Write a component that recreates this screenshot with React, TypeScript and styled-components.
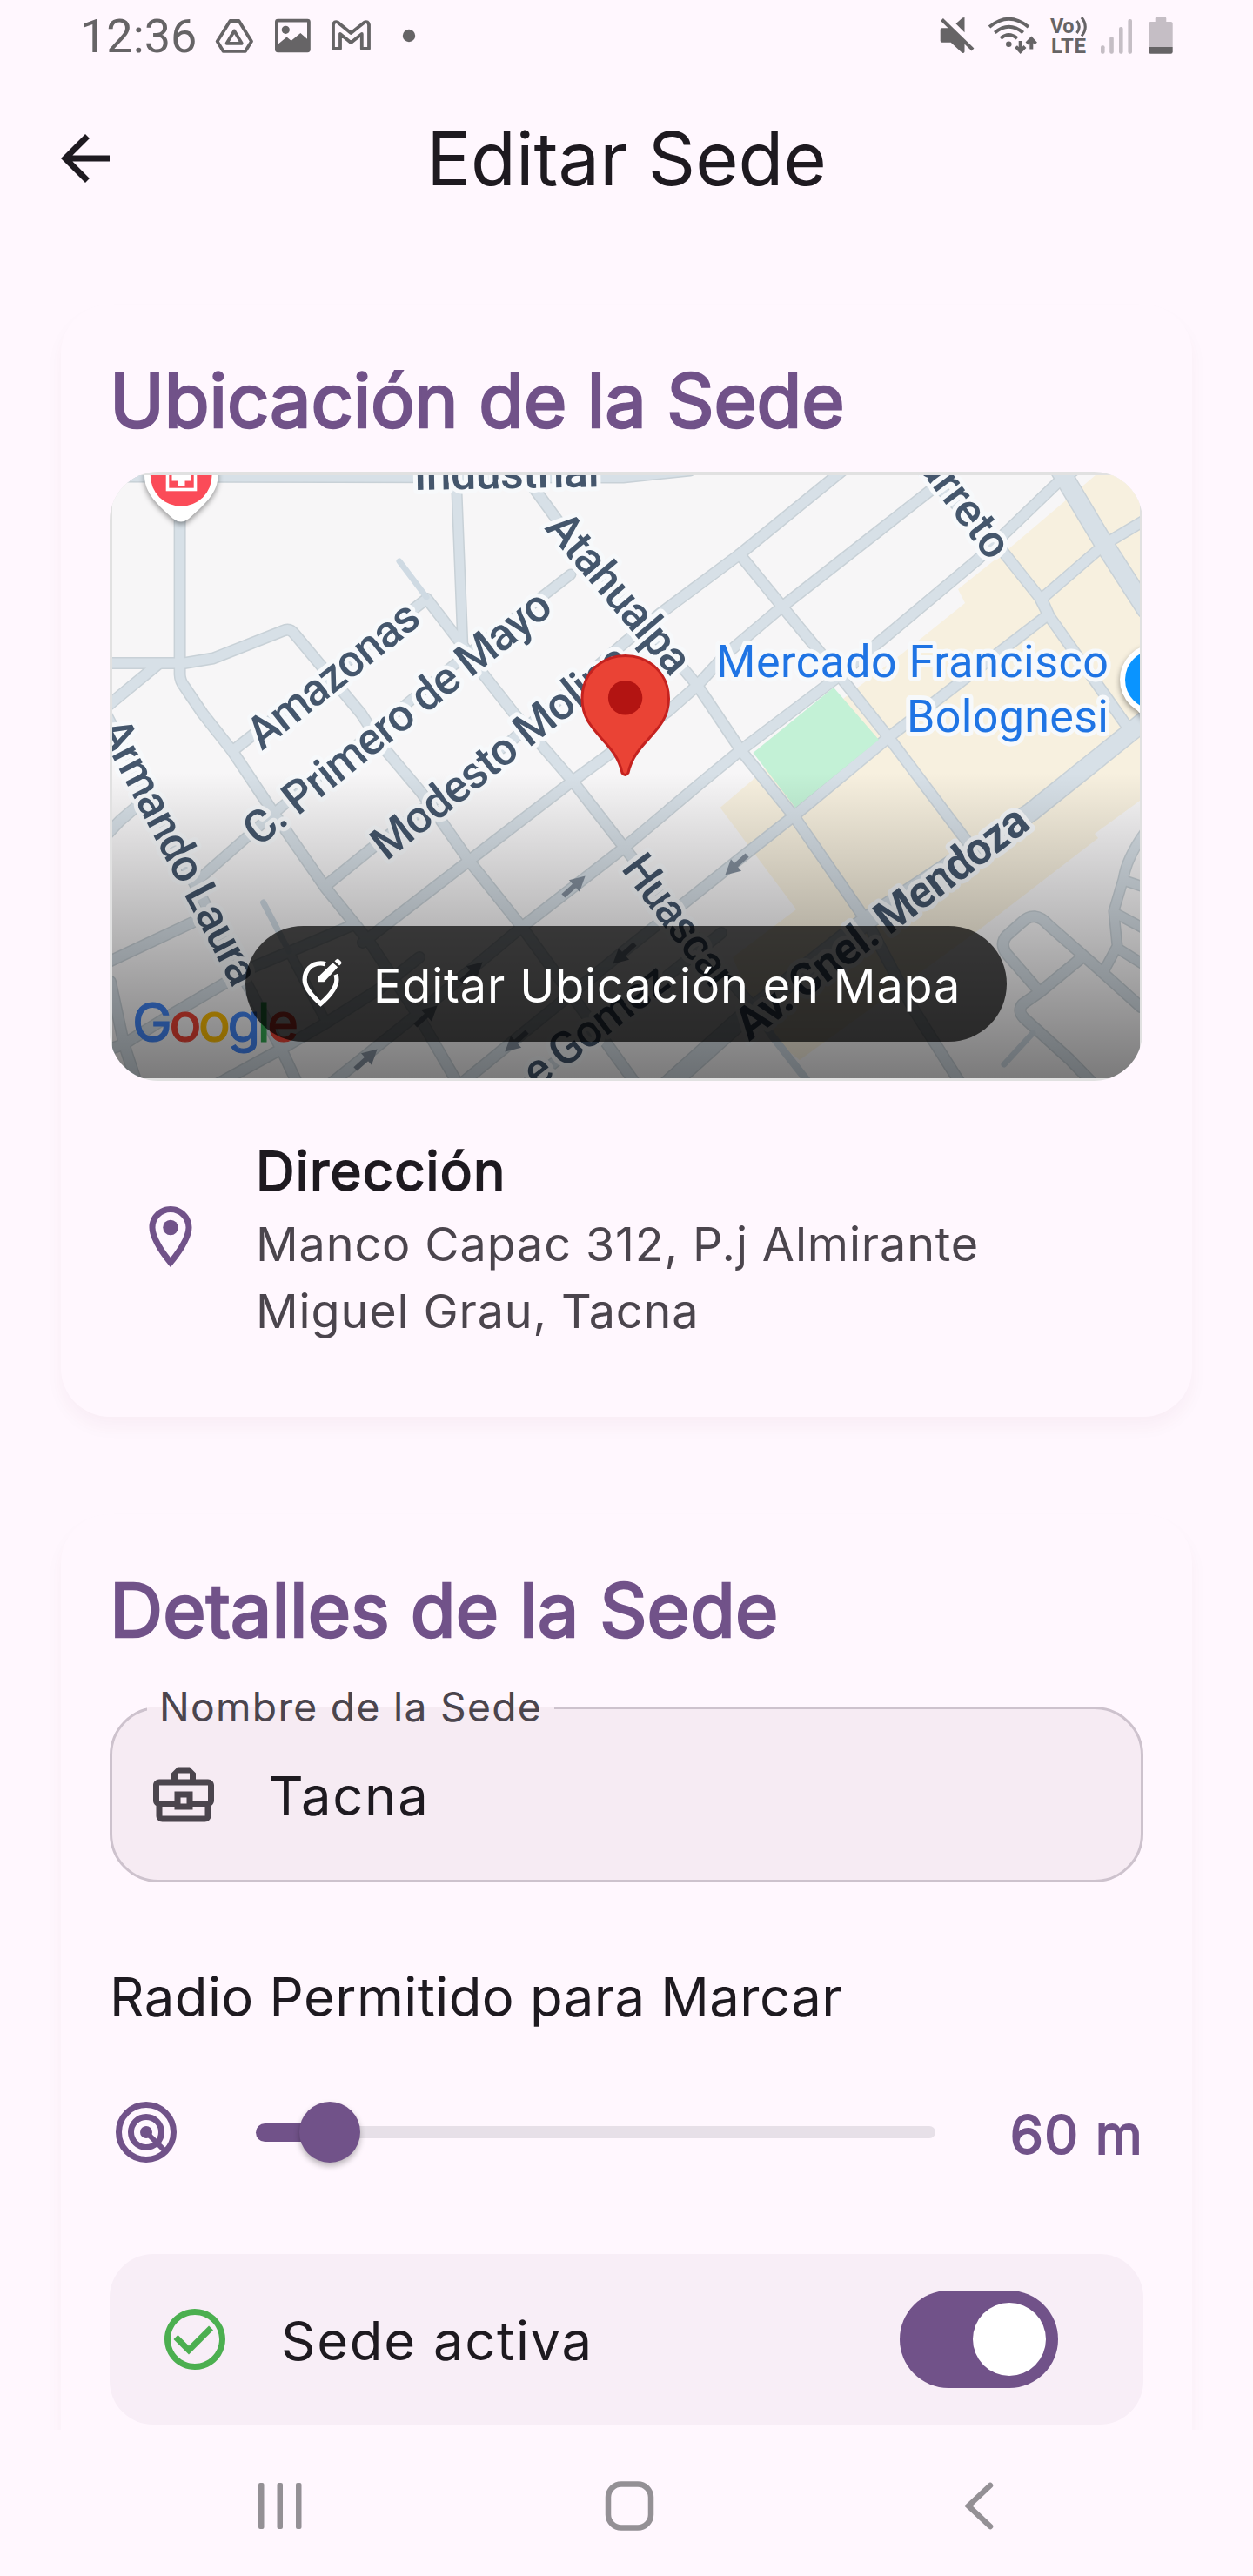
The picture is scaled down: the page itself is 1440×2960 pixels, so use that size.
import React from "react";
import styled, { createGlobalStyle } from "styled-components";

const c = {
  surface: "#fff7fe",
  primary: "#715289",
  ink: "#1e1a20",
  inkSoft: "#4b454d",
  status: "#666466",
  nav: "#949095",
};

const Global = createGlobalStyle`
  * { box-sizing: border-box; }
  body { margin: 0; background: ${c.surface}; }
`;

const Screen = styled.div`
  width: 1440px;
  height: 2960px;
  display: flex;
  flex-direction: column;
  overflow: hidden;
  background: ${c.surface};
  color: ${c.ink};
  font-family: Inter, "Liberation Sans", sans-serif;
  font-optical-sizing: none;
  font-variation-settings: "opsz" 14;
`;

const StatusBar = styled.div`
  height: 84px;
  flex: none;
  display: flex;
  align-items: flex-start;
  padding-left: 92px;
`;

const Clock = styled.span`
  width: 148px;
  font: 400 54px/84px Roboto, "Liberation Sans", sans-serif;
  color: ${c.status};
`;

const StatusRight = styled.div`
  margin-left: auto;
  width: 400px;
  height: 84px;
`;

const AppBar = styled.header`
  height: 196px;
  flex: none;
  display: grid;
  grid-template-columns: 84px 1fr 84px;
  align-items: center;
  padding: 0 56px;
`;

const ScreenTitle = styled.h1`
  margin: 0;
  text-align: center;
  font-size: 84.7px;
  line-height: 108px;
  font-weight: 400;
`;

const Icon = styled.svg<{ $size?: number }>`
  display: block;
  flex: none;
  width: ${(p) => p.$size ?? 84}px;
  height: ${(p) => p.$size ?? 84}px;
`;

const Content = styled.main`
  height: 2512px;
  flex: none;
  overflow: hidden;
  display: flex;
  flex-direction: column;
  gap: 112px;
  padding: 70px 70px 0;
`;

const Card = styled.section<{ $height: number }>`
  height: ${(p) => p.$height}px;
  flex: none;
  padding: 56px;
  border-radius: 56px;
  background: ${c.surface};
  box-shadow: 0 12px 20px rgba(100, 30, 50, 0.04);
`;

const CardTitle = styled.h2<{ $tracking: number }>`
  margin: 0;
  color: ${c.primary};
  font-size: 84.7px;
  line-height: 108px;
  font-weight: 400;
  letter-spacing: ${(p) => p.$tracking}px;
  white-space: nowrap;
  -webkit-text-stroke: 2.65px ${c.primary};
`;

const MapFrame = styled.div`
  position: relative;
  margin-top: 28px;
  height: 700px;
  width: 1187px;
  padding: 4px 3px 3px 3px;
  border-radius: 56px;
  overflow: hidden;
  background: #e1e1e1;
`;

const MapDrawing = styled.svg`
  display: block;
  width: 1181px;
  height: 693px;
`;

const MapShade = styled.div`
  position: absolute;
  inset: 346px 3px 3px 3px;
  background: linear-gradient(rgba(0, 0, 0, 0), rgba(0, 0, 0, 0.5));
`;

const EditPill = styled.button`
  position: absolute;
  left: 156px;
  top: 522px;
  width: 875px;
  height: 133px;
  border: 0;
  border-radius: 67px;
  padding: 0 0 0 55px;
  display: flex;
  align-items: center;
  gap: 29px;
  background: rgba(0, 0, 0, 0.7);
  color: #fff;
  font: inherit;
  font-size: 53.9px;
  letter-spacing: 0.875px;
  white-space: nowrap;
`;

const PillLabel = styled.span`
  padding-top: 3px;
`;

const AddressRow = styled.div`
  margin-top: 58px;
  display: flex;
  align-items: center;
  padding-left: 28px;
  gap: 56px;
`;

const AddressIcon = styled(Icon)`
  margin-bottom: 4px;
`;

const AddressTitle = styled.div`
  font-size: 61.6px;
  line-height: 91px;
  letter-spacing: 1.3px;
  -webkit-text-stroke: 1.9px ${c.ink};
`;

const AddressText = styled.div`
  width: 900px;
  color: ${c.inkSoft};
  font-size: 53.9px;
  line-height: 77px;
  letter-spacing: 0.875px;
`;

const Field = styled.fieldset`
  margin: 36px 0 0;
  padding: 0 0 0 40px;
  min-width: 0;
  width: 1188px;
  height: 223px;
  border: 3.5px solid #cdc2cd;
  border-radius: 56px;
  background: #f6ebf3;
`;

const FieldLabel = styled.legend`
  height: 44px;
  margin: 0;
  padding: 0 14px;
  color: ${c.inkSoft};
  font-size: 46.2px;
  line-height: 42px;
  letter-spacing: 1.3px;
`;

const FieldBody = styled.div`
  height: 156px;
  display: flex;
  align-items: center;
  gap: 56px;
`;

const BodyText = styled.span`
  padding-top: 4px;
  font-size: 61.6px;
  line-height: 92px;
  letter-spacing: 1.7px;
  white-space: nowrap;
`;

const RadiusTitle = styled.div`
  margin-top: 86px;
  font-size: 61.6px;
  line-height: 92px;
  letter-spacing: 0.45px;
`;

const SliderRow = styled.div`
  margin-top: 67px;
  height: 84px;
  display: flex;
  align-items: center;
`;

const Slider = styled.div`
  margin-left: 84px;
  width: 781px;
  display: flex;
  align-items: center;
`;

const SliderDone = styled.div`
  width: 60px;
  height: 21px;
  border-radius: 11px 0 0 11px;
  background: ${c.primary};
`;

const SliderThumb = styled.div`
  width: 70px;
  height: 70px;
  margin: 0 -10px;
  z-index: 1;
  border-radius: 50%;
  background: ${c.primary};
  box-shadow: 0 4px 7px rgba(0, 0, 0, 0.28);
`;

const SliderRest = styled.div`
  flex: 1;
  height: 14px;
  border-radius: 0 7px 7px 0;
  background: #e7e0e8;
`;

const SliderValue = styled.div`
  margin-left: auto;
  color: ${c.primary};
  font-size: 61.6px;
  line-height: 92px;
  padding-top: 5px;
  letter-spacing: 1.2px;
  -webkit-text-stroke: 1.9px ${c.primary};
`;

const ActiveTile = styled.div`
  margin-top: 98px;
  height: 196px;
  padding: 0 98px 0 56px;
  display: flex;
  align-items: center;
  gap: 57px;
  border-radius: 50px;
  background: #f8eef7;
`;

const Switch = styled.div`
  margin-left: auto;
  width: 182px;
  height: 112px;
  padding: 14px;
  display: flex;
  justify-content: flex-end;
  border-radius: 56px;
  background: ${c.primary};
`;

const SwitchThumb = styled.div`
  width: 84px;
  height: 84px;
  border-radius: 50%;
  background: #fff;
`;

const NavBar = styled.nav`
  height: 168px;
  flex: none;
  display: flex;
  justify-content: space-between;
  padding: 40px 272px 0 280px;
`;

const roads: [string, number][] = [
  ["M120 547L717 548L794 540", 15],
  ["M207.6 540V775Q208 783 213 789L234 820L268 863L317.5 937L375 1020L426 1083L483.5 1170L530 1250", 14],
  ["M120 762H213L246 756.5L326 725Q334 721 340 729L416 820L440 857L485.5 911L540 989L601.4 1066L665 1153L735 1250", 14],
  ["M183 763L120 815", 14],
  ["M268 863L491.5 688L533 742L555 773L592 820L659.5 898L717 972L834 1120L863 1153", 14],
  ["M525 540L533 745", 13],
  ["M614 560L641 597L802 787L853 863L913.5 938L998 1060L1051 1160L1108 1250", 14],
  ["M120 963L139 943L160 925", 14],
  ["M230 1010L317.5 933L519 767L657 660", 13],
  ["M375 1018L428 975L590 850L717 740L761 704L851 637L970 540", 14],
  ["M418 1083L540 989L659.5 897L769 817L802 788L835 752L900 697L1071 563L1095 540", 14],
  ["M380 1246L483.6 1163L601 1065L717 975L806 900L851 863L961 780L1124.5 643L1216 555L1236 540", 14],
  ["M530 1246L590 1197L718 1093L847 990L914 937L1022.4 847L1206 706L1198 688L1271 625L1318 597", 14],
  ["M1060 540L1153 633L1196 687L1206 707L1300 840", 14],
  ["M851 637L900 697L971 783L1022 847L1092 940L1130 990", 14],
  ["M1219 540L1271 627L1318 700", 23],
  ["M765 1250L851 1173L994 1060L1186 933L1318 827", 23],
  ["M600 1250L761 1127L830 1072", 14],
  ["M120 815L286 1133L325 1207L345 1250", 14],
  ["M120 1108L222 1060", 14],
  ["M333 1093L375 1173", 12],
  ["M143 1200L199 1165L290 1112L404 1064", 14],
  ["M128 1128L143.5 1200L160 1250M120 1208L143 1200", 14],
  ["M250 1246L325 1205L373 1177L436 1137L483 1100", 14],
  ["M1312 1157L1262 1112L1206 1063Q1190 1045 1175 1060L1158 1075Q1150 1084 1157 1095L1196 1140L1176 1154Q1170 1162 1178 1170L1230 1217L1262 1250M1196 1140L1241 1103", 14],
  ["M1318 955Q1296 985 1292 1010L1281 1047L1285 1087L1269 1117M1294 1012L1318 1020M1284 1050L1318 1068M1286 1090L1318 1110", 13],
];

const lanes: [string, number][] = [
  ["M460 645L491 686", 7],
  ["M303.6 1037L333 1093", 7],
  ["M863 1153L888 1190L932 1246", 9],
  ["M1188 1187L1155 1223", 7],
];

const arrows: [number, number, number][] = [
  [661, 1018, -42],
  [543, 1117, -42],
  [491, 1167, -42],
  [422, 1217, -42],
  [594, 1197, 138],
  [718, 1096, 138],
  [847, 994, 138],
];

const streets: { x: number; y: number; r: number; t: string; len?: number; w?: number; end?: boolean }[] = [
  { x: 477, y: 563, r: -1, t: "Industrial", len: 213 },
  { x: 302, y: 863, r: -38.6, t: "Amazonas", len: 237 },
  { x: 298, y: 974, r: -38.6, t: "C. Primero de Mayo", len: 436 },
  { x: 445, y: 990, r: -38.5, t: "Modesto Molina", len: 362 },
  { x: 626, y: 607, r: 49.5, t: "Atahualpa", len: 226 },
  { x: 1138, y: 646, r: 53, t: "Barreto", end: true },
  { x: 714, y: 998, r: 53, t: "Huascar", len: 180 },
  { x: 269, y: 1136, r: 62.5, t: "Armando Laura", len: 337, end: true },
  { x: 862, y: 1197, r: -37.2, t: "Av. Cnel. Mendoza", len: 408, w: 700 },
  { x: 618, y: 1252, r: -37.5, t: "e Gomez", len: 196 },
];

const halo = {
  stroke: "#f7f9fb",
  strokeWidth: 10,
  strokeLinejoin: "round" as const,
  paintOrder: "stroke",
};

const googleLetters: [string, string][] = [
  ["G", "#4285f4"],
  ["o", "#ea4335"],
  ["o", "#fbbc05"],
  ["g", "#4285f4"],
  ["l", "#34a853"],
  ["e", "#ea4335"],
];

function StreetMap() {
  return (
    <MapDrawing viewBox="130 546 1181 693" preserveAspectRatio="none" fontFamily="Roboto, sans-serif">
      <rect x="130" y="546" width="1181" height="693" fill="#f7f6f7" />
      <path
        d="M1267 540L1161 630L1102 677L1110 693L1039 750L971 802L865 897L828.6 928L916 1045L843 1100L880 1187L920 1218L1128 1067L1263 963L1259 958L1318 915V540Z"
        fill="#f7f0df"
      />
      <g fill="none" strokeLinejoin="round" strokeLinecap="round">
        {roads.map(([d, w], i) => (
          <path key={i} d={d} stroke="#c8d1d7" strokeWidth={w} />
        ))}
        {roads.map(([d, w], i) => (
          <path key={i} d={d} stroke="#d7e0e7" strokeWidth={w - 3} />
        ))}
        {lanes.map(([d, w], i) => (
          <path key={i} d={d} stroke="#cfdae3" strokeWidth={w} />
        ))}
      </g>
      <path d="M959 790L866.5 865L915 928L1011 850Z" fill="#c3f1d6" />
      {arrows.map(([x, y, r], i) => (
        <path
          key={i}
          transform={`translate(${x} ${y}) rotate(${r})`}
          d="M-17 -3H0V-9L17 0L0 9V3H-17Z"
          fill="#84909e"
        />
      ))}
      {streets.map((s) => (
        <text
          key={s.t}
          transform={`translate(${s.x} ${s.y}) rotate(${s.r})`}
          textAnchor={s.end ? "end" : "start"}
          textLength={s.len}
          fontSize="52"
          fontWeight={s.w ?? 500}
          fill="#44566c"
          {...halo}
        >
          {s.t}
        </text>
      ))}
      <g fontSize="52" fill="#1f74e4" textAnchor="end" {...halo}>
        <text x="1275" y="777.5" textLength="451">Mercado Francisco</text>
        <text x="1275" y="840.5" textLength="232">Bolognesi</text>
      </g>
      <g style={{ filter: "drop-shadow(0 3px 3px rgba(0,0,0,.4))" }}>
        <path d="M167 546A42 42 0 0 1 251.500 546C251.500 566 238 578 218 596Q209 603 200 596C180 578 167 566 167 546Z" fill="#fff" />
        <circle cx="1329" cy="781" r="41" fill="#fff" />
        <path d="M1297 802Q1306 816 1329 838V802Z" fill="#fff" />
      </g>
      <circle cx="209.200" cy="546.500" r="35.300" fill="#fb4b58" />
      <rect x="193.500" y="530" width="32" height="32.500" fill="none" stroke="#fff" strokeWidth="3.600" />
      <path d="M205.500 536H213.500V545H220.500V552.500H213.500V558H205.500V552.500H198.500V545H205.500Z" fill="#fff" />
      <circle cx="1328" cy="781" r="34" fill="#0a94ff" />
      <path
        d="M719.600 753.500C691 753.500 670 775 670 803C670 842 708 850 716 888Q719.600 893 723 888C731 850 769.500 842 769.500 803C769.500 775 748 753.500 719.600 753.500Z"
        fill="#ea4335"
        stroke="#c5221f"
        strokeWidth="3"
      />
      <circle cx="719.600" cy="801.700" r="19.700" fill="#b31412" />
      <text x="153" y="1197" fontSize="61.500" fontFamily="Inter, sans-serif" textLength="191" strokeWidth="1.200">
        {googleLetters.map(([l, color], i) => (
          <tspan key={i} fill={color} stroke={color}>
            {l}
          </tspan>
        ))}
      </text>
    </MapDrawing>
  );
}

export default function App() {
  return (
    <Screen>
      <Global />
      <StatusBar>
        <Clock>12:36</Clock>
        <svg width="260" height="84" viewBox="240 0 260 84" fill="none" stroke={c.status} strokeWidth="3.8" strokeLinejoin="round">
          <path d="M264.500 24H274.500L289 47.500L282 58.800H256.500L249.700 47.500Z" />
          <path d="M269.200 35.500L277.800 49.800H260.600Z" />
          <rect x="317.900" y="23.600" width="37" height="34.700" rx="1.500" />
          <circle cx="328.300" cy="34.300" r="4.600" fill={c.status} stroke="none" />
          <path d="M318 52L329.500 42.500L334.700 46.700L345.300 38L355 46.500V59H318Z" fill={c.status} stroke="none" />
          <path d="M383 56V28.500Q384 24 388 25.500L403.300 38L419 25.500Q423 24 424 28.500V56H415.800V39L403.300 49L391 39V56Z" />
          <circle cx="470" cy="41" r="7.200" fill={c.status} stroke="none" />
        </svg>
        <StatusRight>
          <svg width="400" height="84" viewBox="1040 0 400 84" fill={c.status}>
            <path d="M1082.500 32.300H1092.700L1108.500 48V59.500Q1108.500 61 1106 61L1092.700 48.700H1082.500Q1080.700 48.700 1080.700 47V34Q1080.700 32.300 1082.500 32.300ZM1108.500 20V37.300L1098.500 27.300L1106 20.500Z" />
            <path d="M1082.500 22.500L1118 57" stroke={c.status} strokeWidth="4" />
            <g fill="none" stroke={c.status} strokeWidth="4">
              <path d="M1137 31Q1159.300 12.500 1182 31M1143.300 37.500Q1159.300 24 1175.800 37.500M1150 44Q1159.300 36 1169 44" />
              <path d="M1172.700 47V58M1167.500 53.500L1172.700 59L1178 53.500M1185.300 56.500V45M1180 50L1185.300 44.500L1190.500 50" />
              <path d="M1237.500 24Q1243 31 1237.500 38M1243 20Q1251.500 31 1243 41.500" strokeWidth="3" />
            </g>
            <circle cx="1159.300" cy="50.800" r="3.300" />
            <g fontFamily="Roboto, sans-serif" fontWeight="700">
              <text x="1207" y="37.500" fontSize="23.500" textLength="27.500">Vo</text>
              <text x="1208" y="61" fontSize="24" textLength="40">LTE</text>
            </g>
            <g fill="#c5bec5">
              <rect x="1265" y="52.300" width="4.600" height="9.400" rx="2" />
              <rect x="1275.200" y="42" width="4.600" height="19.700" rx="2" />
              <rect x="1286" y="31" width="4.600" height="30.700" rx="2" />
              <rect x="1296.400" y="22" width="4.600" height="39.700" rx="2" />
              <path d="M1327.700 21Q1327.700 19.300 1329.500 19.300H1338.500Q1340.300 19.300 1340.300 21V25H1345.500Q1347.700 25 1347.700 27.200V54H1320V27.200Q1320 25 1322.200 25H1327.700Z" />
            </g>
            <path d="M1320 54H1347.700V59.500Q1347.700 61.700 1345.500 61.700H1322.200Q1320 61.700 1320 59.500Z" />
          </svg>
        </StatusRight>
      </StatusBar>

      <AppBar>
        <Icon viewBox="0 0 24 24" fill={c.ink}>
          <path d="M20 11H7.830l5.590-5.590L12 4l-8 8 8 8 1.410-1.410L7.830 13H20z" />
        </Icon>
        <ScreenTitle>Editar Sede</ScreenTitle>
      </AppBar>

      <Content>
        <Card $height={1278}>
          <CardTitle $tracking={-0.15}>Ubicación de la Sede</CardTitle>
          <MapFrame>
            <StreetMap />
            <MapShade />
            <EditPill>
              <Icon $size={63} viewBox="0 0 24 24" fill="#fff">
                <path
                  d="M14 3.350C13.400 3.100 12.700 3 12 3C8 3 5 6 5 10.200C5 13.200 7.300 16.600 12 20.700C16.700 16.600 19 13.200 19 10.200C19 9.400 18.900 8.600 18.600 7.900"
                  fill="none"
                  stroke="#fff"
                  strokeWidth="2"
                />
                <path d="M11 11.100V8.900L17.350 2.750L19.500 4.700L13.500 11.100ZM18.100 2L19 1.200Q19.500 .8 20 1.300L20.900 2.200Q21.400 2.800 21 3.200L20.200 4Z" />
              </Icon>
              <PillLabel>Editar Ubicación en Mapa</PillLabel>
            </EditPill>
          </MapFrame>
          <AddressRow>
            <AddressIcon viewBox="0 0 24 24" fill={c.primary}>
              <path d="M12 2C8.130 2 5 5.130 5 9c0 5.250 7 13 7 13s7-7.750 7-13c0-3.870-3.130-7-7-7zM7 9c0-2.760 2.240-5 5-5s5 2.240 5 5c0 2.880-2.880 7.190-5 9.880C9.920 16.210 7 11.850 7 9z" />
              <circle cx="12" cy="9" r="2.500" />
            </AddressIcon>
            <div>
              <AddressTitle>Dirección</AddressTitle>
              <AddressText>Manco Capac 312, P.j Almirante Miguel Grau, Tacna</AddressText>
            </div>
          </AddressRow>
        </Card>

        <Card $height={1400}>
          <CardTitle $tracking={0.08}>Detalles de la Sede</CardTitle>
          <Field>
            <FieldLabel>Nombre de la Sede</FieldLabel>
            <FieldBody>
              <Icon viewBox="0 0 24 24" fill={c.inkSoft}>
                <path
                  fillRule="evenodd"
                  d="M20 7h-4V5l-2-2h-4L8 5v2H4c-1.100 0-2 .9-2 2v5c0 .75.4 1.380 1 1.730V19c0 1.110.89 2 2 2h14c1.110 0 2-.89 2-2v-3.280c.59-.35 1-.99 1-1.720V9c0-1.100-.9-2-2-2zM10 5h4v2h-4V5zM4 9h16v5h-5v-3H9v3H4V9zm9 6h-2v-2h2v2zm6 4H5v-3h4v1h6v-1h4v3z"
                />
              </Icon>
              <BodyText>Tacna</BodyText>
            </FieldBody>
          </Field>
          <RadiusTitle>Radio Permitido para Marcar</RadiusTitle>
          <SliderRow>
            <Icon viewBox="0 0 24 24" fill="none" stroke={c.primary} strokeWidth="2">
              <circle cx="12" cy="12" r="9" />
              <circle cx="12" cy="12" r="5" />
              <circle cx="12" cy="12" r="2" fill={c.primary} stroke="none" />
              <path d="M12 12L18.200 18.200" strokeWidth="1.700" />
            </Icon>
            <Slider>
              <SliderDone />
              <SliderThumb />
              <SliderRest />
            </Slider>
            <SliderValue>60 m</SliderValue>
          </SliderRow>
          <ActiveTile>
            <Icon viewBox="0 0 24 24" fill="#4caf50">
              <path d="M16.590 7.580L10 14.170l-3.590-3.580L5 12l5 5 8-8zM12 2C6.480 2 2 6.480 2 12s4.480 10 10 10 10-4.480 10-10S17.520 2 12 2zm0 18c-4.420 0-8-3.580-8-8s3.580-8 8-8 8 3.580 8 8-3.580 8-8 8z" />
            </Icon>
            <BodyText>Sede activa</BodyText>
            <Switch>
              <SwitchThumb />
            </Switch>
          </ActiveTile>
        </Card>
      </Content>

      <NavBar>
        <Icon viewBox="0 0 84 84" fill={c.nav}>
          <rect x="17" y="21" width="6.500" height="53" rx="2" />
          <rect x="38.500" y="21" width="6.500" height="53" rx="2" />
          <rect x="60" y="21" width="6.500" height="53" rx="2" />
        </Icon>
        <Icon viewBox="0 0 84 84" fill="none" stroke={c.nav} strokeWidth="6.500">
          <rect x="17" y="22.500" width="49" height="50" rx="15" />
        </Icon>
        <Icon viewBox="0 0 84 84" fill="none" stroke={c.nav} strokeWidth="6.500" strokeLinecap="round">
          <path d="M54 24L29 47.500L54 71" />
        </Icon>
      </NavBar>
    </Screen>
  );
}
